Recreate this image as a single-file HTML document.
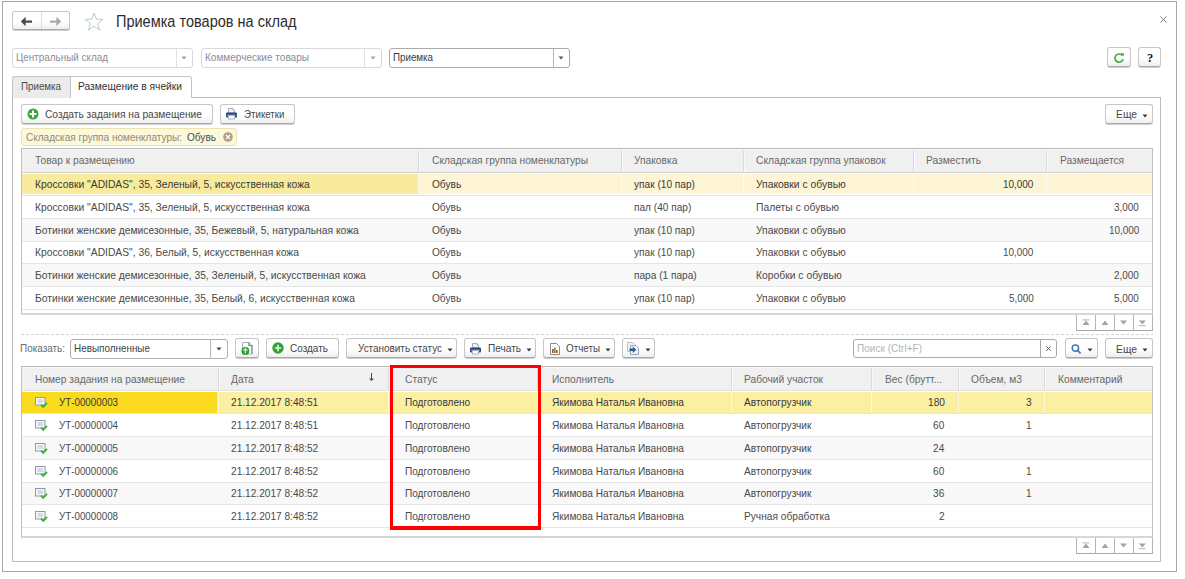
<!DOCTYPE html>
<html><head><meta charset="utf-8"><style>
html,body{margin:0;padding:0;background:#fff;width:1185px;height:579px;overflow:hidden;}
body{position:relative;font-family:"Liberation Sans", sans-serif;}
</style></head><body>
<div style="position:absolute;left:2px;top:1px;width:1175px;height:571px;box-sizing:border-box;border:1px solid #a6a6a6;"></div>
<div style="position:absolute;left:12px;top:11px;width:58px;height:19px;box-sizing:border-box;border:1px solid #c6c6c6;border-bottom:1px solid #a9a9a9;border-radius:3px;background:linear-gradient(#ffffff 0%,#ffffff 55%,#efefef 100%);box-shadow:0 1px 0 #cfcfcf;"></div>
<div style="position:absolute;left:41px;top:12px;width:1px;height:17px;background:#dcdcdc;"></div>
<svg style="position:absolute;left:20px;top:15.5px" width="13" height="11" viewBox="0 0 13 11"><path d="M0.8 5.5 L5.6 0.8 L5.6 4.5 L12 4.5 L12 6.7 L5.6 6.7 L5.6 10.2 Z" fill="#4a4a4a"/></svg>
<svg style="position:absolute;left:49px;top:15.5px" width="13" height="11" viewBox="0 0 13 11"><path d="M12.2 5.5 L7.4 0.8 L7.4 4.5 L1 4.5 L1 6.7 L7.4 6.7 L7.4 10.2 Z" fill="#a9a9a9"/></svg>
<svg style="position:absolute;left:84px;top:12px" width="20" height="19" viewBox="0 0 20 19"><path d="M10 1 L12.3 7.2 L19 7.4 L13.7 11.5 L15.6 18 L10 14.2 L4.4 18 L6.3 11.5 L1 7.4 L7.7 7.2 Z" fill="none" stroke="#b9cbd3" stroke-width="1"/></svg>
<div style="position:absolute;left:115.50px;top:11.59px;line-height:20px;font-size:15.6px;transform:scaleX(0.9312);transform-origin:0 0;color:#2d2d2d;white-space:nowrap;">Приемка товаров на склад</div>
<svg style="position:absolute;left:1160px;top:15.5px" width="7" height="7" viewBox="0 0 7 7"><path d="M0.5 0.5 L6.5 6.5 M6.5 0.5 L0.5 6.5" stroke="#7a7a7a" stroke-width="1"/></svg>
<div style="position:absolute;left:12px;top:48px;width:181px;height:20px;box-sizing:border-box;border:1px solid #d9d9d9;border-radius:3px;background:#fff;"></div>
<div style="position:absolute;left:176px;top:49px;width:1px;height:18px;background:#e2e2e2;"></div>
<svg style="position:absolute;left:181.0px;top:55.5px" width="6.0" height="4" viewBox="0 0 6.0 4"><path d="M0.5 0.5 H5.5 L3.0 3.5 Z" fill="#a0a0a0"/></svg>
<div style="position:absolute;left:15.50px;top:50.19px;line-height:14px;font-size:11px;transform:scaleX(0.8991);transform-origin:0 0;color:#8c8c96;white-space:nowrap;">Центральный склад</div>
<div style="position:absolute;left:201px;top:48px;width:181px;height:20px;box-sizing:border-box;border:1px solid #d9d9d9;border-radius:3px;background:#fff;"></div>
<div style="position:absolute;left:364px;top:49px;width:1px;height:18px;background:#e2e2e2;"></div>
<svg style="position:absolute;left:369.5px;top:55.5px" width="6.0" height="4" viewBox="0 0 6.0 4"><path d="M0.5 0.5 H5.5 L3.0 3.5 Z" fill="#a0a0a0"/></svg>
<div style="position:absolute;left:204.50px;top:50.19px;line-height:14px;font-size:11px;transform:scaleX(0.9120);transform-origin:0 0;color:#8c8c96;white-space:nowrap;">Коммерческие товары</div>
<div style="position:absolute;left:389px;top:48px;width:181px;height:20px;box-sizing:border-box;border:1px solid #ababab;border-radius:3px;background:#fff;"></div>
<div style="position:absolute;left:553px;top:49px;width:1px;height:18px;background:#b5b5b5;"></div>
<svg style="position:absolute;left:558.0px;top:55.5px" width="6.0" height="4" viewBox="0 0 6.0 4"><path d="M0.5 0.5 H5.5 L3.0 3.5 Z" fill="#555"/></svg>
<div style="position:absolute;left:393.00px;top:50.19px;line-height:14px;font-size:11px;transform:scaleX(0.8883);transform-origin:0 0;color:#3a3a3a;white-space:nowrap;">Приемка</div>
<div style="position:absolute;left:1107px;top:47px;width:24px;height:20px;box-sizing:border-box;border:1px solid #c6c6c6;border-bottom:1px solid #a9a9a9;border-radius:3px;background:linear-gradient(#ffffff 0%,#ffffff 55%,#efefef 100%);box-shadow:0 1px 0 #cfcfcf;"></div>
<svg style="position:absolute;left:1113px;top:52px" width="12" height="12" viewBox="0 0 12 12"><path d="M9.2 3.5 A4.1 4.1 0 1 0 10 7.2" fill="none" stroke="#37a83c" stroke-width="1.6"/><path d="M7.6 1.2 L10.8 1.2 L10.8 4.4 Z" fill="#37a83c"/></svg>
<div style="position:absolute;left:1138px;top:47px;width:23px;height:20px;box-sizing:border-box;border:1px solid #c6c6c6;border-bottom:1px solid #a9a9a9;border-radius:3px;background:linear-gradient(#ffffff 0%,#ffffff 55%,#efefef 100%);box-shadow:0 1px 0 #cfcfcf;"></div>
<div style="position:absolute;left:1146.88px;top:49.67px;line-height:16px;font-size:12.5px;transform:scaleX(1.0000);transform-origin:0 0;color:#1a1a1a;white-space:nowrap;font-family:Liberation Serif;font-weight:bold;">?</div>
<div style="position:absolute;left:12px;top:97px;width:1149px;height:465px;box-sizing:border-box;border:1px solid #bdbdbd;"></div>
<div style="position:absolute;left:12px;top:76px;width:59px;height:22px;box-sizing:border-box;border:1px solid #c4c4c4;border-bottom:none;border-radius:3px 0 0 0;background:#ebebeb;"></div>
<div style="position:absolute;left:70px;top:76px;width:122px;height:22px;box-sizing:border-box;border:1px solid #c4c4c4;border-bottom:none;border-radius:0 3px 0 0;background:#fff;"></div>
<div style="position:absolute;left:71px;top:97px;width:120px;height:1px;background:#fff;"></div>
<div style="position:absolute;left:20.50px;top:79.19px;line-height:14px;font-size:11px;transform:scaleX(0.8883);transform-origin:0 0;color:#4a4a4a;white-space:nowrap;">Приемка</div>
<div style="position:absolute;left:78.00px;top:79.19px;line-height:14px;font-size:11px;transform:scaleX(0.9291);transform-origin:0 0;color:#333;white-space:nowrap;">Размещение в ячейки</div>
<div style="position:absolute;left:21px;top:104px;width:192px;height:20px;box-sizing:border-box;border:1px solid #c6c6c6;border-bottom:1px solid #a9a9a9;border-radius:3px;background:linear-gradient(#ffffff 0%,#ffffff 55%,#efefef 100%);box-shadow:0 1px 0 #cfcfcf;"></div>
<svg style="position:absolute;left:27px;top:108px" width="12" height="12" viewBox="0 0 12 12"><circle cx="6" cy="6" r="5.5" fill="#36a63a"/><path d="M6 2.6 V9.4 M2.6 6 H9.4" stroke="#fff" stroke-width="2"/></svg>
<div style="position:absolute;left:44.50px;top:107.19px;line-height:14px;font-size:11px;transform:scaleX(0.9275);transform-origin:0 0;color:#474747;white-space:nowrap;">Создать задания на размещение</div>
<div style="position:absolute;left:220px;top:104px;width:75px;height:20px;box-sizing:border-box;border:1px solid #c6c6c6;border-bottom:1px solid #a9a9a9;border-radius:3px;background:linear-gradient(#ffffff 0%,#ffffff 55%,#efefef 100%);box-shadow:0 1px 0 #cfcfcf;"></div>
<svg style="position:absolute;left:225px;top:107px" width="13" height="13" viewBox="0 0 13 13"><path d="M3.5 1.5 H7.8 L9.5 3.2 V6 H3.5 Z" fill="#eef1f5" stroke="#a3b0c2" stroke-width="1"/><path d="M7.8 1.5 V3.2 H9.5" fill="#7f93b3"/><rect x="1" y="5.5" width="11" height="5" rx="1" fill="#2f4483"/><rect x="2.2" y="7.6" width="8.6" height="1.6" fill="#7d8fb6"/><rect x="3.5" y="8.5" width="6" height="3.5" fill="#fdfdfd" stroke="#aab6bd" stroke-width="1"/></svg>
<div style="position:absolute;left:243.50px;top:107.19px;line-height:14px;font-size:11px;transform:scaleX(0.8846);transform-origin:0 0;color:#474747;white-space:nowrap;">Этикетки</div>
<div style="position:absolute;left:1105px;top:104px;width:48px;height:20px;box-sizing:border-box;border:1px solid #c6c6c6;border-bottom:1px solid #a9a9a9;border-radius:3px;background:linear-gradient(#ffffff 0%,#ffffff 55%,#efefef 100%);box-shadow:0 1px 0 #cfcfcf;"></div>
<div style="position:absolute;left:1116.00px;top:107.19px;line-height:14px;font-size:11px;transform:scaleX(0.9379);transform-origin:0 0;color:#474747;white-space:nowrap;">Еще</div>
<svg style="position:absolute;left:1142.0px;top:113.5px" width="6.0" height="4" viewBox="0 0 6.0 4"><path d="M0.5 0.5 H5.5 L3.0 3.5 Z" fill="#3a3a3a"/></svg>
<div style="position:absolute;left:21px;top:128px;width:216px;height:18px;box-sizing:border-box;border:1px solid #ece3b3;border-radius:3px;background:#fbf8dc;"></div>
<div style="position:absolute;left:26.00px;top:130.19px;line-height:14px;font-size:11px;transform:scaleX(0.9127);transform-origin:0 0;color:#958970;white-space:nowrap;">Складская группа номенклатуры:</div>
<div style="position:absolute;left:186.80px;top:130.19px;line-height:14px;font-size:11px;transform:scaleX(0.9147);transform-origin:0 0;color:#4c4c4c;white-space:nowrap;">Обувь</div>
<svg style="position:absolute;left:223px;top:131.5px" width="10" height="10" viewBox="0 0 10 10"><circle cx="5" cy="5" r="4.8" fill="#b29d84"/><path d="M3 3 L7 7 M7 3 L3 7" stroke="#fff" stroke-width="1.3"/></svg>
<div style="position:absolute;left:21px;top:148px;width:1132px;height:167px;box-sizing:border-box;border:1px solid #b9b9b9;border-left-color:#c0c0c0;border-right-color:#c0c0c0;border-bottom:2px solid #d6d6d6;"></div>
<div style="position:absolute;left:22px;top:149px;width:1130px;height:23px;background:#f0f0f0;"></div>
<div style="position:absolute;left:22px;top:149px;width:1130px;height:1px;background:#f7f7f7;"></div>
<div style="position:absolute;left:22px;top:172px;width:1130px;height:1px;background:#d2d2d2;"></div>
<div style="position:absolute;left:418px;top:150px;width:1px;height:22px;background:#d9d9d9;"></div>
<div style="position:absolute;left:419px;top:150px;width:1px;height:22px;background:#fafafa;"></div>
<div style="position:absolute;left:621px;top:150px;width:1px;height:22px;background:#d9d9d9;"></div>
<div style="position:absolute;left:622px;top:150px;width:1px;height:22px;background:#fafafa;"></div>
<div style="position:absolute;left:743px;top:150px;width:1px;height:22px;background:#d9d9d9;"></div>
<div style="position:absolute;left:744px;top:150px;width:1px;height:22px;background:#fafafa;"></div>
<div style="position:absolute;left:913px;top:150px;width:1px;height:22px;background:#d9d9d9;"></div>
<div style="position:absolute;left:914px;top:150px;width:1px;height:22px;background:#fafafa;"></div>
<div style="position:absolute;left:1046px;top:150px;width:1px;height:22px;background:#d9d9d9;"></div>
<div style="position:absolute;left:1047px;top:150px;width:1px;height:22px;background:#fafafa;"></div>
<div style="position:absolute;left:22px;top:174px;width:1130px;height:20px;background:#fdf5d5;"></div>
<div style="position:absolute;left:22px;top:174px;width:396px;height:20px;background:#f9eb9c;"></div>
<div style="position:absolute;left:418px;top:174px;width:1px;height:20px;background:#fffcee;"></div>
<div style="position:absolute;left:621px;top:174px;width:1px;height:20px;background:#fffcee;"></div>
<div style="position:absolute;left:743px;top:174px;width:1px;height:20px;background:#fffcee;"></div>
<div style="position:absolute;left:913px;top:174px;width:1px;height:20px;background:#fffcee;"></div>
<div style="position:absolute;left:1046px;top:174px;width:1px;height:20px;background:#fffcee;"></div>
<div style="position:absolute;left:22px;top:195px;width:1130px;height:1px;background:#e5e5e5;"></div>
<div style="position:absolute;left:22px;top:219px;width:1130px;height:22px;background:#f7f8f7;"></div>
<div style="position:absolute;left:22px;top:218px;width:1130px;height:1px;background:#e5e5e5;"></div>
<div style="position:absolute;left:22px;top:241px;width:1130px;height:1px;background:#e5e5e5;"></div>
<div style="position:absolute;left:22px;top:264px;width:1130px;height:22px;background:#f7f8f7;"></div>
<div style="position:absolute;left:22px;top:263px;width:1130px;height:1px;background:#e5e5e5;"></div>
<div style="position:absolute;left:22px;top:286px;width:1130px;height:1px;background:#e5e5e5;"></div>
<div style="position:absolute;left:22px;top:309px;width:1130px;height:1px;background:#e5e5e5;"></div>
<div style="position:absolute;left:34.50px;top:153.19px;line-height:14px;font-size:11px;transform:scaleX(0.9300);transform-origin:0 0;color:#686868;white-space:nowrap;">Товар к размещению</div>
<div style="position:absolute;left:431.50px;top:153.19px;line-height:14px;font-size:11px;transform:scaleX(0.9300);transform-origin:0 0;color:#686868;white-space:nowrap;">Складская группа номенклатуры</div>
<div style="position:absolute;left:634.00px;top:153.19px;line-height:14px;font-size:11px;transform:scaleX(0.9300);transform-origin:0 0;color:#686868;white-space:nowrap;">Упаковка</div>
<div style="position:absolute;left:756.00px;top:153.19px;line-height:14px;font-size:11px;transform:scaleX(0.9300);transform-origin:0 0;color:#686868;white-space:nowrap;">Складская группа упаковок</div>
<div style="position:absolute;left:926.00px;top:153.19px;line-height:14px;font-size:11px;transform:scaleX(0.9300);transform-origin:0 0;color:#686868;white-space:nowrap;">Разместить</div>
<div style="position:absolute;left:1060.00px;top:153.19px;line-height:14px;font-size:11px;transform:scaleX(0.9300);transform-origin:0 0;color:#686868;white-space:nowrap;">Размещается</div>
<div style="position:absolute;left:34.50px;top:177.19px;line-height:14px;font-size:11px;transform:scaleX(0.9350);transform-origin:0 0;color:#383838;white-space:nowrap;">Кроссовки &quot;ADIDAS&quot;, 35, Зеленый, 5, искусственная кожа</div>
<div style="position:absolute;left:431.50px;top:177.19px;line-height:14px;font-size:11px;transform:scaleX(0.9200);transform-origin:0 0;color:#383838;white-space:nowrap;">Обувь</div>
<div style="position:absolute;left:634.00px;top:177.19px;line-height:14px;font-size:11px;transform:scaleX(0.9200);transform-origin:0 0;color:#383838;white-space:nowrap;">упак (10 пар)</div>
<div style="position:absolute;left:756.00px;top:177.19px;line-height:14px;font-size:11px;transform:scaleX(0.9400);transform-origin:0 0;color:#383838;white-space:nowrap;">Упаковки с обувью</div>
<div style="position:absolute;left:1003.21px;top:177.19px;line-height:14px;font-size:11px;transform:scaleX(0.9000);transform-origin:0 0;color:#383838;white-space:nowrap;">10,000</div>
<div style="position:absolute;left:34.50px;top:200.19px;line-height:14px;font-size:11px;transform:scaleX(0.9350);transform-origin:0 0;color:#4a4a4a;white-space:nowrap;">Кроссовки &quot;ADIDAS&quot;, 35, Зеленый, 5, искусственная кожа</div>
<div style="position:absolute;left:431.50px;top:200.19px;line-height:14px;font-size:11px;transform:scaleX(0.9200);transform-origin:0 0;color:#4a4a4a;white-space:nowrap;">Обувь</div>
<div style="position:absolute;left:634.00px;top:200.19px;line-height:14px;font-size:11px;transform:scaleX(0.9200);transform-origin:0 0;color:#4a4a4a;white-space:nowrap;">пал (40 пар)</div>
<div style="position:absolute;left:756.00px;top:200.19px;line-height:14px;font-size:11px;transform:scaleX(0.9400);transform-origin:0 0;color:#4a4a4a;white-space:nowrap;">Палеты с обувью</div>
<div style="position:absolute;left:1114.22px;top:200.19px;line-height:14px;font-size:11px;transform:scaleX(0.9000);transform-origin:0 0;color:#4a4a4a;white-space:nowrap;">3,000</div>
<div style="position:absolute;left:34.50px;top:223.19px;line-height:14px;font-size:11px;transform:scaleX(0.9350);transform-origin:0 0;color:#4a4a4a;white-space:nowrap;">Ботинки женские демисезонные, 35, Бежевый, 5, натуральная кожа</div>
<div style="position:absolute;left:431.50px;top:223.19px;line-height:14px;font-size:11px;transform:scaleX(0.9200);transform-origin:0 0;color:#4a4a4a;white-space:nowrap;">Обувь</div>
<div style="position:absolute;left:634.00px;top:223.19px;line-height:14px;font-size:11px;transform:scaleX(0.9200);transform-origin:0 0;color:#4a4a4a;white-space:nowrap;">упак (10 пар)</div>
<div style="position:absolute;left:756.00px;top:223.19px;line-height:14px;font-size:11px;transform:scaleX(0.9400);transform-origin:0 0;color:#4a4a4a;white-space:nowrap;">Упаковки с обувью</div>
<div style="position:absolute;left:1108.71px;top:223.19px;line-height:14px;font-size:11px;transform:scaleX(0.9000);transform-origin:0 0;color:#4a4a4a;white-space:nowrap;">10,000</div>
<div style="position:absolute;left:34.50px;top:245.19px;line-height:14px;font-size:11px;transform:scaleX(0.9350);transform-origin:0 0;color:#4a4a4a;white-space:nowrap;">Кроссовки &quot;ADIDAS&quot;, 36, Белый, 5, искусственная кожа</div>
<div style="position:absolute;left:431.50px;top:245.19px;line-height:14px;font-size:11px;transform:scaleX(0.9200);transform-origin:0 0;color:#4a4a4a;white-space:nowrap;">Обувь</div>
<div style="position:absolute;left:634.00px;top:245.19px;line-height:14px;font-size:11px;transform:scaleX(0.9200);transform-origin:0 0;color:#4a4a4a;white-space:nowrap;">упак (10 пар)</div>
<div style="position:absolute;left:756.00px;top:245.19px;line-height:14px;font-size:11px;transform:scaleX(0.9400);transform-origin:0 0;color:#4a4a4a;white-space:nowrap;">Упаковки с обувью</div>
<div style="position:absolute;left:1003.21px;top:245.19px;line-height:14px;font-size:11px;transform:scaleX(0.9000);transform-origin:0 0;color:#4a4a4a;white-space:nowrap;">10,000</div>
<div style="position:absolute;left:34.50px;top:268.19px;line-height:14px;font-size:11px;transform:scaleX(0.9350);transform-origin:0 0;color:#4a4a4a;white-space:nowrap;">Ботинки женские демисезонные, 35, Зеленый, 5, искусственная кожа</div>
<div style="position:absolute;left:431.50px;top:268.19px;line-height:14px;font-size:11px;transform:scaleX(0.9200);transform-origin:0 0;color:#4a4a4a;white-space:nowrap;">Обувь</div>
<div style="position:absolute;left:634.00px;top:268.19px;line-height:14px;font-size:11px;transform:scaleX(0.9200);transform-origin:0 0;color:#4a4a4a;white-space:nowrap;">пара (1 пара)</div>
<div style="position:absolute;left:756.00px;top:268.19px;line-height:14px;font-size:11px;transform:scaleX(0.9400);transform-origin:0 0;color:#4a4a4a;white-space:nowrap;">Коробки с обувью</div>
<div style="position:absolute;left:1114.22px;top:268.19px;line-height:14px;font-size:11px;transform:scaleX(0.9000);transform-origin:0 0;color:#4a4a4a;white-space:nowrap;">2,000</div>
<div style="position:absolute;left:34.50px;top:291.19px;line-height:14px;font-size:11px;transform:scaleX(0.9350);transform-origin:0 0;color:#4a4a4a;white-space:nowrap;">Ботинки женские демисезонные, 35, Белый, 6, искусственная кожа</div>
<div style="position:absolute;left:431.50px;top:291.19px;line-height:14px;font-size:11px;transform:scaleX(0.9200);transform-origin:0 0;color:#4a4a4a;white-space:nowrap;">Обувь</div>
<div style="position:absolute;left:634.00px;top:291.19px;line-height:14px;font-size:11px;transform:scaleX(0.9200);transform-origin:0 0;color:#4a4a4a;white-space:nowrap;">упак (10 пар)</div>
<div style="position:absolute;left:756.00px;top:291.19px;line-height:14px;font-size:11px;transform:scaleX(0.9400);transform-origin:0 0;color:#4a4a4a;white-space:nowrap;">Упаковки с обувью</div>
<div style="position:absolute;left:1008.72px;top:291.19px;line-height:14px;font-size:11px;transform:scaleX(0.9000);transform-origin:0 0;color:#4a4a4a;white-space:nowrap;">5,000</div>
<div style="position:absolute;left:1114.22px;top:291.19px;line-height:14px;font-size:11px;transform:scaleX(0.9000);transform-origin:0 0;color:#4a4a4a;white-space:nowrap;">5,000</div>
<div style="position:absolute;left:1076px;top:315px;width:77px;height:16px;box-sizing:border-box;border:1px solid #b4b4b4;border-top:none;border-bottom-color:#a8a8a8;background:#fff;"></div>
<div style="position:absolute;left:1095px;top:315px;width:1px;height:16px;background:#b4b4b4;"></div>
<div style="position:absolute;left:1114px;top:315px;width:1px;height:16px;background:#b4b4b4;"></div>
<div style="position:absolute;left:1133px;top:315px;width:1px;height:16px;background:#b4b4b4;"></div>
<svg style="position:absolute;left:1076px;top:315px" width="77" height="16" viewBox="0 0 77 16"><rect x="6.5" y="4.3999999999999995" width="7" height="1" fill="#a3a3a3" opacity="0.8"/><path d="M6.5 10.1 L10 5.6 L13.5 10.1 Z" fill="#a3a3a3"/><path d="M25.5 10.1 L29 5.6 L32.5 10.1 Z" fill="#a3a3a3"/><path d="M44 5.6 L47.5 9.6 L51 5.6 Z" fill="#a3a3a3"/><path d="M62.8 5.6 L66.3 9.6 L69.8 5.6 Z" fill="#a3a3a3"/><rect x="62.8" y="10.2" width="7" height="1" fill="#a3a3a3" opacity="0.8"/></svg>
<div style="position:absolute;left:21px;top:334px;width:1132px;height:1px;background:repeating-linear-gradient(90deg,#d2d2d2 0 3px,transparent 3px 5px);"></div>
<div style="position:absolute;left:20.20px;top:341.19px;line-height:14px;font-size:11px;transform:scaleX(0.9031);transform-origin:0 0;color:#6a6a6a;white-space:nowrap;">Показать:</div>
<div style="position:absolute;left:70px;top:339px;width:158px;height:20px;box-sizing:border-box;border:1px solid #b2b2b2;border-radius:3px;background:#fff;"></div>
<div style="position:absolute;left:210px;top:340px;width:1px;height:18px;background:#b8b8b8;"></div>
<svg style="position:absolute;left:215.5px;top:346.5px" width="6.0" height="4" viewBox="0 0 6.0 4"><path d="M0.5 0.5 H5.5 L3.0 3.5 Z" fill="#444"/></svg>
<div style="position:absolute;left:73.50px;top:341.19px;line-height:14px;font-size:11px;transform:scaleX(0.9001);transform-origin:0 0;color:#444;white-space:nowrap;">Невыполненные</div>
<div style="position:absolute;left:235px;top:338px;width:24px;height:20px;box-sizing:border-box;border:1px solid #c6c6c6;border-bottom:1px solid #a9a9a9;border-radius:3px;background:linear-gradient(#ffffff 0%,#ffffff 55%,#efefef 100%);box-shadow:0 1px 0 #cfcfcf;"></div>
<svg style="position:absolute;left:240px;top:341px" width="14" height="15" viewBox="0 0 14 15"><path d="M2.5 1.5 H9 L12 4.5 V13 H2.5 Z" fill="#fbfbfd" stroke="#aab4c4" stroke-width="1"/><path d="M9 1.5 V4.5 H12" fill="none" stroke="#6b7f9e" stroke-width="1.2"/><path d="M12 4.5 V13" stroke="#6b7f9e" stroke-width="1"/><circle cx="5.4" cy="10" r="3.9" fill="#2e9e34"/><path d="M5.4 7.6 V12.4 M3.4 9.6 L5.4 7.6 L7.4 9.6" stroke="#d9f0d9" stroke-width="1.2" fill="none"/></svg>
<div style="position:absolute;left:266px;top:338px;width:73px;height:20px;box-sizing:border-box;border:1px solid #c6c6c6;border-bottom:1px solid #a9a9a9;border-radius:3px;background:linear-gradient(#ffffff 0%,#ffffff 55%,#efefef 100%);box-shadow:0 1px 0 #cfcfcf;"></div>
<svg style="position:absolute;left:271.5px;top:342px" width="12" height="12" viewBox="0 0 12 12"><circle cx="6" cy="6" r="5.7" fill="#2fa035"/><path d="M6 2.8 V9.2 M2.8 6 H9.2" stroke="#e4f4e4" stroke-width="1.7"/></svg>
<div style="position:absolute;left:290.00px;top:341.19px;line-height:14px;font-size:11px;transform:scaleX(0.9088);transform-origin:0 0;color:#474747;white-space:nowrap;">Создать</div>
<div style="position:absolute;left:346px;top:338px;width:111px;height:20px;box-sizing:border-box;border:1px solid #c6c6c6;border-bottom:1px solid #a9a9a9;border-radius:3px;background:linear-gradient(#ffffff 0%,#ffffff 55%,#efefef 100%);box-shadow:0 1px 0 #cfcfcf;"></div>
<div style="position:absolute;left:358.00px;top:341.19px;line-height:14px;font-size:11px;transform:scaleX(0.9020);transform-origin:0 0;color:#474747;white-space:nowrap;">Установить статус</div>
<svg style="position:absolute;left:446.5px;top:347.5px" width="6.0" height="4" viewBox="0 0 6.0 4"><path d="M0.5 0.5 H5.5 L3.0 3.5 Z" fill="#3a3a3a"/></svg>
<div style="position:absolute;left:464px;top:338px;width:72px;height:20px;box-sizing:border-box;border:1px solid #c6c6c6;border-bottom:1px solid #a9a9a9;border-radius:3px;background:linear-gradient(#ffffff 0%,#ffffff 55%,#efefef 100%);box-shadow:0 1px 0 #cfcfcf;"></div>
<svg style="position:absolute;left:469px;top:342px" width="13" height="13" viewBox="0 0 13 13"><path d="M3.5 1.5 H7.8 L9.5 3.2 V6 H3.5 Z" fill="#eef1f5" stroke="#a3b0c2" stroke-width="1"/><path d="M7.8 1.5 V3.2 H9.5" fill="#7f93b3"/><rect x="1" y="5.5" width="11" height="5" rx="1" fill="#2f4483"/><rect x="2.2" y="7.6" width="8.6" height="1.6" fill="#7d8fb6"/><rect x="3.5" y="8.5" width="6" height="3.5" fill="#fdfdfd" stroke="#aab6bd" stroke-width="1"/></svg>
<div style="position:absolute;left:487.50px;top:341.19px;line-height:14px;font-size:11px;transform:scaleX(0.9155);transform-origin:0 0;color:#474747;white-space:nowrap;">Печать</div>
<svg style="position:absolute;left:525.5px;top:347.5px" width="6.0" height="4" viewBox="0 0 6.0 4"><path d="M0.5 0.5 H5.5 L3.0 3.5 Z" fill="#3a3a3a"/></svg>
<div style="position:absolute;left:543px;top:338px;width:72px;height:20px;box-sizing:border-box;border:1px solid #c6c6c6;border-bottom:1px solid #a9a9a9;border-radius:3px;background:linear-gradient(#ffffff 0%,#ffffff 55%,#efefef 100%);box-shadow:0 1px 0 #cfcfcf;"></div>
<svg style="position:absolute;left:549px;top:342px" width="12" height="14" viewBox="0 0 12 14"><path d="M1.5 1.5 H7.5 L10.5 4.5 V12.5 H1.5 Z" fill="#fff" stroke="#8a8a8a" stroke-width="1"/><rect x="3" y="7" width="1.6" height="4" fill="#d23a2a"/><rect x="5" y="5.5" width="1.6" height="5.5" fill="#3aa53a"/><rect x="7" y="8" width="1.6" height="3" fill="#d23a2a"/></svg>
<div style="position:absolute;left:566.00px;top:341.19px;line-height:14px;font-size:11px;transform:scaleX(0.8940);transform-origin:0 0;color:#474747;white-space:nowrap;">Отчеты</div>
<svg style="position:absolute;left:604.5px;top:347.5px" width="6.0" height="4" viewBox="0 0 6.0 4"><path d="M0.5 0.5 H5.5 L3.0 3.5 Z" fill="#3a3a3a"/></svg>
<div style="position:absolute;left:622px;top:338px;width:33px;height:20px;box-sizing:border-box;border:1px solid #c6c6c6;border-bottom:1px solid #a9a9a9;border-radius:3px;background:linear-gradient(#ffffff 0%,#ffffff 55%,#efefef 100%);box-shadow:0 1px 0 #cfcfcf;"></div>
<svg style="position:absolute;left:627px;top:342px" width="14" height="14" viewBox="0 0 14 14"><path d="M0.5 0.5 H6 L8 2.5 V9.5 H0.5 Z" fill="#f4f5f8" stroke="#b7bfcc" stroke-width="1"/><path d="M3.5 3.5 H9 L11.5 6 V12.5 H3.5 Z" fill="#eef2f8" stroke="#98a6bb" stroke-width="1"/><path d="M2.5 6.5 H5.8 V4.6 L9.2 7.8 L5.8 11 V9.1 H2.5 Z" fill="#2f5596"/></svg>
<svg style="position:absolute;left:644.5px;top:347.5px" width="6.0" height="4" viewBox="0 0 6.0 4"><path d="M0.5 0.5 H5.5 L3.0 3.5 Z" fill="#3a3a3a"/></svg>
<div style="position:absolute;left:853px;top:339px;width:204px;height:19px;box-sizing:border-box;border:1px solid #ababab;border-radius:3px;background:#fff;"></div>
<div style="position:absolute;left:1040px;top:340px;width:1px;height:17px;background:#a8a8a8;"></div>
<div style="position:absolute;left:857.00px;top:341.19px;line-height:14px;font-size:11px;transform:scaleX(0.9139);transform-origin:0 0;color:#b4b4b4;white-space:nowrap;">Поиск (Ctrl+F)</div>
<svg style="position:absolute;left:1046px;top:346px" width="5" height="5" viewBox="0 0 5 5"><path d="M0.3 0.3 L4.7 4.7 M4.7 0.3 L0.3 4.7" stroke="#505050" stroke-width="0.9"/></svg>
<div style="position:absolute;left:1065px;top:338px;width:33px;height:20px;box-sizing:border-box;border:1px solid #c6c6c6;border-bottom:1px solid #a9a9a9;border-radius:3px;background:linear-gradient(#ffffff 0%,#ffffff 55%,#efefef 100%);box-shadow:0 1px 0 #cfcfcf;"></div>
<svg style="position:absolute;left:1071px;top:344px" width="11" height="10" viewBox="0 0 11 10"><circle cx="4.4" cy="4.1" r="3.2" fill="none" stroke="#3a78b8" stroke-width="1.5"/><path d="M6.6 6.4 L9.6 9.4" stroke="#3a78b8" stroke-width="1.7"/></svg>
<svg style="position:absolute;left:1086.5px;top:347.5px" width="6.0" height="4" viewBox="0 0 6.0 4"><path d="M0.5 0.5 H5.5 L3.0 3.5 Z" fill="#3a3a3a"/></svg>
<div style="position:absolute;left:1105px;top:338px;width:48px;height:20px;box-sizing:border-box;border:1px solid #c6c6c6;border-bottom:1px solid #a9a9a9;border-radius:3px;background:linear-gradient(#ffffff 0%,#ffffff 55%,#efefef 100%);box-shadow:0 1px 0 #cfcfcf;"></div>
<div style="position:absolute;left:1116.00px;top:342.19px;line-height:14px;font-size:11px;transform:scaleX(0.9379);transform-origin:0 0;color:#474747;white-space:nowrap;">Еще</div>
<svg style="position:absolute;left:1142.0px;top:347.5px" width="6.0" height="4" viewBox="0 0 6.0 4"><path d="M0.5 0.5 H5.5 L3.0 3.5 Z" fill="#3a3a3a"/></svg>
<div style="position:absolute;left:21px;top:366px;width:1132px;height:172px;box-sizing:border-box;border:1px solid #b9b9b9;border-left-color:#c0c0c0;border-right-color:#c0c0c0;border-bottom:2px solid #d6d6d6;"></div>
<div style="position:absolute;left:22px;top:367px;width:1130px;height:23px;background:#f0f0f0;"></div>
<div style="position:absolute;left:22px;top:367px;width:1130px;height:1px;background:#f7f7f7;"></div>
<div style="position:absolute;left:22px;top:390px;width:1130px;height:1px;background:#e0dfe4;"></div>
<div style="position:absolute;left:218px;top:368px;width:1px;height:22px;background:#d9d9d9;"></div>
<div style="position:absolute;left:219px;top:368px;width:1px;height:22px;background:#fafafa;"></div>
<div style="position:absolute;left:388px;top:368px;width:1px;height:22px;background:#d9d9d9;"></div>
<div style="position:absolute;left:389px;top:368px;width:1px;height:22px;background:#fafafa;"></div>
<div style="position:absolute;left:537px;top:368px;width:1px;height:22px;background:#d9d9d9;"></div>
<div style="position:absolute;left:538px;top:368px;width:1px;height:22px;background:#fafafa;"></div>
<div style="position:absolute;left:731px;top:368px;width:1px;height:22px;background:#d9d9d9;"></div>
<div style="position:absolute;left:732px;top:368px;width:1px;height:22px;background:#fafafa;"></div>
<div style="position:absolute;left:871px;top:368px;width:1px;height:22px;background:#d9d9d9;"></div>
<div style="position:absolute;left:872px;top:368px;width:1px;height:22px;background:#fafafa;"></div>
<div style="position:absolute;left:958px;top:368px;width:1px;height:22px;background:#d9d9d9;"></div>
<div style="position:absolute;left:959px;top:368px;width:1px;height:22px;background:#fafafa;"></div>
<div style="position:absolute;left:1044px;top:368px;width:1px;height:22px;background:#d9d9d9;"></div>
<div style="position:absolute;left:1045px;top:368px;width:1px;height:22px;background:#fafafa;"></div>
<div style="position:absolute;left:22px;top:392px;width:1130px;height:21px;background:#fbf0a2;"></div>
<div style="position:absolute;left:22px;top:392px;width:195px;height:21px;background:#f9da1e;"></div>
<div style="position:absolute;left:218px;top:392px;width:1px;height:21px;background:#fff8d0;"></div>
<div style="position:absolute;left:388px;top:392px;width:1px;height:21px;background:#fff8d0;"></div>
<div style="position:absolute;left:537px;top:392px;width:1px;height:21px;background:#fff8d0;"></div>
<div style="position:absolute;left:731px;top:392px;width:1px;height:21px;background:#fff8d0;"></div>
<div style="position:absolute;left:871px;top:392px;width:1px;height:21px;background:#fff8d0;"></div>
<div style="position:absolute;left:958px;top:392px;width:1px;height:21px;background:#fff8d0;"></div>
<div style="position:absolute;left:1044px;top:392px;width:1px;height:21px;background:#fff8d0;"></div>
<div style="position:absolute;left:22px;top:413px;width:1130px;height:1px;background:#e5e5e5;"></div>
<div style="position:absolute;left:22px;top:437px;width:1130px;height:22px;background:#f8f8f8;"></div>
<div style="position:absolute;left:22px;top:436px;width:1130px;height:1px;background:#e5e5e5;"></div>
<div style="position:absolute;left:22px;top:459px;width:1130px;height:1px;background:#e5e5e5;"></div>
<div style="position:absolute;left:22px;top:483px;width:1130px;height:21px;background:#f8f8f8;"></div>
<div style="position:absolute;left:22px;top:482px;width:1130px;height:1px;background:#e5e5e5;"></div>
<div style="position:absolute;left:22px;top:504px;width:1130px;height:1px;background:#e5e5e5;"></div>
<div style="position:absolute;left:22px;top:527px;width:1130px;height:1px;background:#e5e5e5;"></div>
<div style="position:absolute;left:34.50px;top:372.19px;line-height:14px;font-size:11px;transform:scaleX(0.9300);transform-origin:0 0;color:#686868;white-space:nowrap;">Номер задания на размещение</div>
<div style="position:absolute;left:231.00px;top:372.19px;line-height:14px;font-size:11px;transform:scaleX(0.9300);transform-origin:0 0;color:#686868;white-space:nowrap;">Дата</div>
<svg style="position:absolute;left:368px;top:372px" width="7" height="10" viewBox="0 0 7 10"><path d="M3.5 1 V8" stroke="#4a4a4a" stroke-width="1"/><path d="M1 6.5 H6 L3.5 9 Z" fill="#4a4a4a"/></svg>
<div style="position:absolute;left:404.50px;top:372.19px;line-height:14px;font-size:11px;transform:scaleX(0.9300);transform-origin:0 0;color:#686868;white-space:nowrap;">Статус</div>
<div style="position:absolute;left:552.00px;top:372.19px;line-height:14px;font-size:11px;transform:scaleX(0.9300);transform-origin:0 0;color:#686868;white-space:nowrap;">Исполнитель</div>
<div style="position:absolute;left:744.00px;top:372.19px;line-height:14px;font-size:11px;transform:scaleX(0.9300);transform-origin:0 0;color:#686868;white-space:nowrap;">Рабочий участок</div>
<div style="position:absolute;left:885.00px;top:372.19px;line-height:14px;font-size:11px;transform:scaleX(0.9300);transform-origin:0 0;color:#686868;white-space:nowrap;">Вес (брутт...</div>
<div style="position:absolute;left:971.00px;top:372.19px;line-height:14px;font-size:11px;transform:scaleX(0.9300);transform-origin:0 0;color:#686868;white-space:nowrap;">Объем, м3</div>
<div style="position:absolute;left:1057.50px;top:372.19px;line-height:14px;font-size:11px;transform:scaleX(0.9300);transform-origin:0 0;color:#686868;white-space:nowrap;">Комментарий</div>
<svg style="position:absolute;left:35px;top:397px" width="13" height="12" viewBox="0 0 13 12"><rect x="0.5" y="0.5" width="9.5" height="7.5" fill="#f7f8fa" stroke="#8d99a8" stroke-width="1"/><path d="M2.5 3 H8 M2.5 5 H8" stroke="#b4bcc6" stroke-width="1"/><path d="M6 7.6 L8.2 9.8 L12 5.8" fill="none" stroke="#3cae3c" stroke-width="1.9"/></svg>
<div style="position:absolute;left:58.80px;top:395.19px;line-height:14px;font-size:11px;transform:scaleX(0.8900);transform-origin:0 0;color:#383838;white-space:nowrap;">УТ-00000003</div>
<div style="position:absolute;left:230.50px;top:395.19px;line-height:14px;font-size:11px;transform:scaleX(0.9200);transform-origin:0 0;color:#383838;white-space:nowrap;">21.12.2017 8:48:51</div>
<div style="position:absolute;left:404.50px;top:395.19px;line-height:14px;font-size:11px;transform:scaleX(0.9150);transform-origin:0 0;color:#383838;white-space:nowrap;">Подготовлено</div>
<div style="position:absolute;left:551.50px;top:395.19px;line-height:14px;font-size:11px;transform:scaleX(0.9200);transform-origin:0 0;color:#383838;white-space:nowrap;">Якимова Наталья Ивановна</div>
<div style="position:absolute;left:744.00px;top:395.19px;line-height:14px;font-size:11px;transform:scaleX(0.9250);transform-origin:0 0;color:#383838;white-space:nowrap;">Автопогрузчик</div>
<div style="position:absolute;left:927.61px;top:395.19px;line-height:14px;font-size:11px;transform:scaleX(0.9200);transform-origin:0 0;color:#383838;white-space:nowrap;">180</div>
<div style="position:absolute;left:1025.87px;top:395.19px;line-height:14px;font-size:11px;transform:scaleX(0.9200);transform-origin:0 0;color:#383838;white-space:nowrap;">3</div>
<svg style="position:absolute;left:35px;top:420px" width="13" height="12" viewBox="0 0 13 12"><rect x="0.5" y="0.5" width="9.5" height="7.5" fill="#f7f8fa" stroke="#8d99a8" stroke-width="1"/><path d="M2.5 3 H8 M2.5 5 H8" stroke="#b4bcc6" stroke-width="1"/><path d="M6 7.6 L8.2 9.8 L12 5.8" fill="none" stroke="#3cae3c" stroke-width="1.9"/></svg>
<div style="position:absolute;left:58.80px;top:418.19px;line-height:14px;font-size:11px;transform:scaleX(0.8900);transform-origin:0 0;color:#4a4a4a;white-space:nowrap;">УТ-00000004</div>
<div style="position:absolute;left:230.50px;top:418.19px;line-height:14px;font-size:11px;transform:scaleX(0.9200);transform-origin:0 0;color:#4a4a4a;white-space:nowrap;">21.12.2017 8:48:51</div>
<div style="position:absolute;left:404.50px;top:418.19px;line-height:14px;font-size:11px;transform:scaleX(0.9150);transform-origin:0 0;color:#4a4a4a;white-space:nowrap;">Подготовлено</div>
<div style="position:absolute;left:551.50px;top:418.19px;line-height:14px;font-size:11px;transform:scaleX(0.9200);transform-origin:0 0;color:#4a4a4a;white-space:nowrap;">Якимова Наталья Ивановна</div>
<div style="position:absolute;left:744.00px;top:418.19px;line-height:14px;font-size:11px;transform:scaleX(0.9250);transform-origin:0 0;color:#4a4a4a;white-space:nowrap;">Автопогрузчик</div>
<div style="position:absolute;left:933.23px;top:418.19px;line-height:14px;font-size:11px;transform:scaleX(0.9200);transform-origin:0 0;color:#4a4a4a;white-space:nowrap;">60</div>
<div style="position:absolute;left:1025.87px;top:418.19px;line-height:14px;font-size:11px;transform:scaleX(0.9200);transform-origin:0 0;color:#4a4a4a;white-space:nowrap;">1</div>
<svg style="position:absolute;left:35px;top:443px" width="13" height="12" viewBox="0 0 13 12"><rect x="0.5" y="0.5" width="9.5" height="7.5" fill="#f7f8fa" stroke="#8d99a8" stroke-width="1"/><path d="M2.5 3 H8 M2.5 5 H8" stroke="#b4bcc6" stroke-width="1"/><path d="M6 7.6 L8.2 9.8 L12 5.8" fill="none" stroke="#3cae3c" stroke-width="1.9"/></svg>
<div style="position:absolute;left:58.80px;top:441.19px;line-height:14px;font-size:11px;transform:scaleX(0.8900);transform-origin:0 0;color:#4a4a4a;white-space:nowrap;">УТ-00000005</div>
<div style="position:absolute;left:230.50px;top:441.19px;line-height:14px;font-size:11px;transform:scaleX(0.9200);transform-origin:0 0;color:#4a4a4a;white-space:nowrap;">21.12.2017 8:48:52</div>
<div style="position:absolute;left:404.50px;top:441.19px;line-height:14px;font-size:11px;transform:scaleX(0.9150);transform-origin:0 0;color:#4a4a4a;white-space:nowrap;">Подготовлено</div>
<div style="position:absolute;left:551.50px;top:441.19px;line-height:14px;font-size:11px;transform:scaleX(0.9200);transform-origin:0 0;color:#4a4a4a;white-space:nowrap;">Якимова Наталья Ивановна</div>
<div style="position:absolute;left:744.00px;top:441.19px;line-height:14px;font-size:11px;transform:scaleX(0.9250);transform-origin:0 0;color:#4a4a4a;white-space:nowrap;">Автопогрузчик</div>
<div style="position:absolute;left:933.23px;top:441.19px;line-height:14px;font-size:11px;transform:scaleX(0.9200);transform-origin:0 0;color:#4a4a4a;white-space:nowrap;">24</div>
<svg style="position:absolute;left:35px;top:466px" width="13" height="12" viewBox="0 0 13 12"><rect x="0.5" y="0.5" width="9.5" height="7.5" fill="#f7f8fa" stroke="#8d99a8" stroke-width="1"/><path d="M2.5 3 H8 M2.5 5 H8" stroke="#b4bcc6" stroke-width="1"/><path d="M6 7.6 L8.2 9.8 L12 5.8" fill="none" stroke="#3cae3c" stroke-width="1.9"/></svg>
<div style="position:absolute;left:58.80px;top:464.19px;line-height:14px;font-size:11px;transform:scaleX(0.8900);transform-origin:0 0;color:#4a4a4a;white-space:nowrap;">УТ-00000006</div>
<div style="position:absolute;left:230.50px;top:464.19px;line-height:14px;font-size:11px;transform:scaleX(0.9200);transform-origin:0 0;color:#4a4a4a;white-space:nowrap;">21.12.2017 8:48:52</div>
<div style="position:absolute;left:404.50px;top:464.19px;line-height:14px;font-size:11px;transform:scaleX(0.9150);transform-origin:0 0;color:#4a4a4a;white-space:nowrap;">Подготовлено</div>
<div style="position:absolute;left:551.50px;top:464.19px;line-height:14px;font-size:11px;transform:scaleX(0.9200);transform-origin:0 0;color:#4a4a4a;white-space:nowrap;">Якимова Наталья Ивановна</div>
<div style="position:absolute;left:744.00px;top:464.19px;line-height:14px;font-size:11px;transform:scaleX(0.9250);transform-origin:0 0;color:#4a4a4a;white-space:nowrap;">Автопогрузчик</div>
<div style="position:absolute;left:933.23px;top:464.19px;line-height:14px;font-size:11px;transform:scaleX(0.9200);transform-origin:0 0;color:#4a4a4a;white-space:nowrap;">60</div>
<div style="position:absolute;left:1025.87px;top:464.19px;line-height:14px;font-size:11px;transform:scaleX(0.9200);transform-origin:0 0;color:#4a4a4a;white-space:nowrap;">1</div>
<svg style="position:absolute;left:35px;top:488px" width="13" height="12" viewBox="0 0 13 12"><rect x="0.5" y="0.5" width="9.5" height="7.5" fill="#f7f8fa" stroke="#8d99a8" stroke-width="1"/><path d="M2.5 3 H8 M2.5 5 H8" stroke="#b4bcc6" stroke-width="1"/><path d="M6 7.6 L8.2 9.8 L12 5.8" fill="none" stroke="#3cae3c" stroke-width="1.9"/></svg>
<div style="position:absolute;left:58.80px;top:486.19px;line-height:14px;font-size:11px;transform:scaleX(0.8900);transform-origin:0 0;color:#4a4a4a;white-space:nowrap;">УТ-00000007</div>
<div style="position:absolute;left:230.50px;top:486.19px;line-height:14px;font-size:11px;transform:scaleX(0.9200);transform-origin:0 0;color:#4a4a4a;white-space:nowrap;">21.12.2017 8:48:52</div>
<div style="position:absolute;left:404.50px;top:486.19px;line-height:14px;font-size:11px;transform:scaleX(0.9150);transform-origin:0 0;color:#4a4a4a;white-space:nowrap;">Подготовлено</div>
<div style="position:absolute;left:551.50px;top:486.19px;line-height:14px;font-size:11px;transform:scaleX(0.9200);transform-origin:0 0;color:#4a4a4a;white-space:nowrap;">Якимова Наталья Ивановна</div>
<div style="position:absolute;left:744.00px;top:486.19px;line-height:14px;font-size:11px;transform:scaleX(0.9250);transform-origin:0 0;color:#4a4a4a;white-space:nowrap;">Автопогрузчик</div>
<div style="position:absolute;left:933.23px;top:486.19px;line-height:14px;font-size:11px;transform:scaleX(0.9200);transform-origin:0 0;color:#4a4a4a;white-space:nowrap;">36</div>
<div style="position:absolute;left:1025.87px;top:486.19px;line-height:14px;font-size:11px;transform:scaleX(0.9200);transform-origin:0 0;color:#4a4a4a;white-space:nowrap;">1</div>
<svg style="position:absolute;left:35px;top:511px" width="13" height="12" viewBox="0 0 13 12"><rect x="0.5" y="0.5" width="9.5" height="7.5" fill="#f7f8fa" stroke="#8d99a8" stroke-width="1"/><path d="M2.5 3 H8 M2.5 5 H8" stroke="#b4bcc6" stroke-width="1"/><path d="M6 7.6 L8.2 9.8 L12 5.8" fill="none" stroke="#3cae3c" stroke-width="1.9"/></svg>
<div style="position:absolute;left:58.80px;top:509.19px;line-height:14px;font-size:11px;transform:scaleX(0.8900);transform-origin:0 0;color:#4a4a4a;white-space:nowrap;">УТ-00000008</div>
<div style="position:absolute;left:230.50px;top:509.19px;line-height:14px;font-size:11px;transform:scaleX(0.9200);transform-origin:0 0;color:#4a4a4a;white-space:nowrap;">21.12.2017 8:48:52</div>
<div style="position:absolute;left:404.50px;top:509.19px;line-height:14px;font-size:11px;transform:scaleX(0.9150);transform-origin:0 0;color:#4a4a4a;white-space:nowrap;">Подготовлено</div>
<div style="position:absolute;left:551.50px;top:509.19px;line-height:14px;font-size:11px;transform:scaleX(0.9200);transform-origin:0 0;color:#4a4a4a;white-space:nowrap;">Якимова Наталья Ивановна</div>
<div style="position:absolute;left:744.00px;top:509.19px;line-height:14px;font-size:11px;transform:scaleX(0.9250);transform-origin:0 0;color:#4a4a4a;white-space:nowrap;">Ручная обработка</div>
<div style="position:absolute;left:938.87px;top:509.19px;line-height:14px;font-size:11px;transform:scaleX(0.9200);transform-origin:0 0;color:#4a4a4a;white-space:nowrap;">2</div>
<div style="position:absolute;left:1076px;top:538px;width:77px;height:16px;box-sizing:border-box;border:1px solid #b4b4b4;border-top:none;border-bottom-color:#a8a8a8;background:#fff;"></div>
<div style="position:absolute;left:1095px;top:538px;width:1px;height:16px;background:#b4b4b4;"></div>
<div style="position:absolute;left:1114px;top:538px;width:1px;height:16px;background:#b4b4b4;"></div>
<div style="position:absolute;left:1133px;top:538px;width:1px;height:16px;background:#b4b4b4;"></div>
<svg style="position:absolute;left:1076px;top:538px" width="77" height="16" viewBox="0 0 77 16"><rect x="6.5" y="4.3999999999999995" width="7" height="1" fill="#a3a3a3" opacity="0.8"/><path d="M6.5 10.1 L10 5.6 L13.5 10.1 Z" fill="#a3a3a3"/><path d="M25.5 10.1 L29 5.6 L32.5 10.1 Z" fill="#a3a3a3"/><path d="M44 5.6 L47.5 9.6 L51 5.6 Z" fill="#a3a3a3"/><path d="M62.8 5.6 L66.3 9.6 L69.8 5.6 Z" fill="#a3a3a3"/><rect x="62.8" y="10.2" width="7" height="1" fill="#a3a3a3" opacity="0.8"/></svg>
<div style="position:absolute;left:390px;top:365px;width:151px;height:165px;box-sizing:border-box;border:3px solid #ff0000;border-bottom-width:4px;"></div>
</body></html>
